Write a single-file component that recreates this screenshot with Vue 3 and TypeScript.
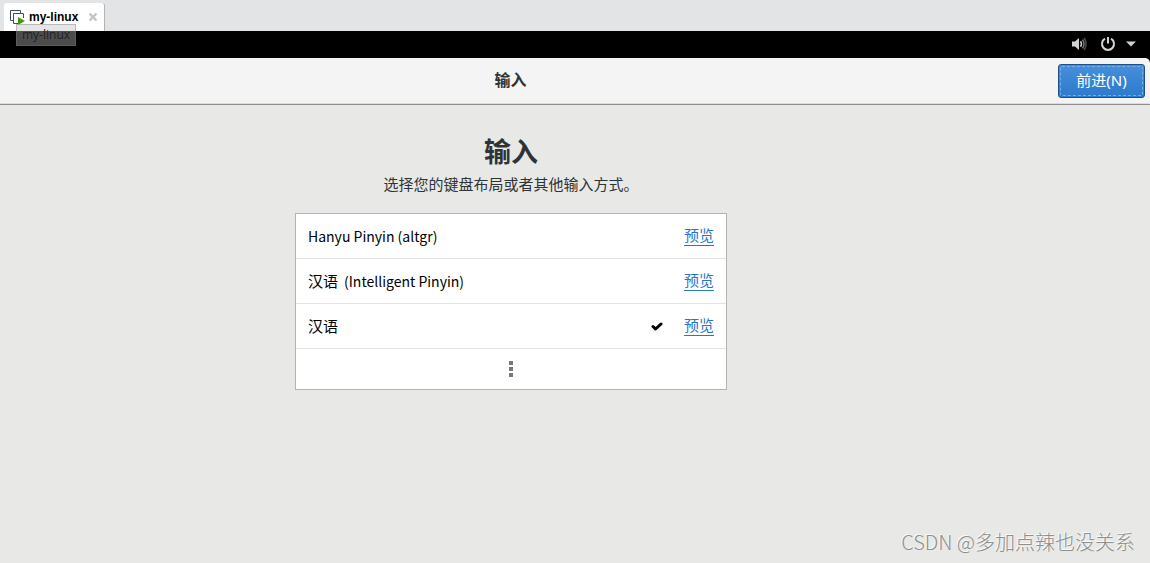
<script setup lang="ts">
import { ref } from 'vue'

interface InputSource {
  id: string
  language?: string
  layout?: string
}

const sources: InputSource[] = [
  { id: 'altgr', layout: 'Hanyu Pinyin (altgr)' },
  { id: 'intelligent', language: '汉语', layout: '(Intelligent Pinyin)' },
  { id: 'chinese', language: '汉语' },
]
const selected = ref('chinese')
</script>

<template>
  <div class="app">
    <nav class="tabs">
      <div class="tab">
        <svg class="vm-icon" width="16" height="16" viewBox="0 0 16 16" aria-hidden="true">
          <path d="M3.5 11.5h-3v-10h10v3" fill="none" stroke="#3d4f5c" />
          <path d="M8 14.500H3.500v-10h10v4.500" fill="#fff" stroke="#3d4f5c" />
          <path d="M8 8l7 4-7 4z" fill="#3f9c0c" />
        </svg>
        <a class="tab-name" href="#my-linux">my-linux</a>
        <button class="close" type="button" aria-label="关闭">
          <svg width="10" height="10" viewBox="0 0 10 10"><path d="M1.500 1.500l7 7M8.500 1.500l-7 7" stroke="#c2c2c2" stroke-width="2.200" /></svg>
        </button>
        <span class="tooltip">my-linux</span>
      </div>
    </nav>

    <div class="status">
      <svg width="16" height="16" viewBox="0 0 16 16" aria-hidden="true">
        <path d="M1 5.500h3L8 2v12l-4-3.500H1z" fill="#d2d2d2" />
        <path d="M9.500 5.200q2 2.800 0 5.600" fill="none" stroke="#c4c4c4" stroke-width="1.500" />
        <path d="M11.500 3.500q3 4.500 0 9" fill="none" stroke="#777" stroke-width="1.500" />
        <path d="M13.300 2q3.500 6 0 12" fill="none" stroke="#4c4c4c" stroke-width="1.500" />
      </svg>
      <svg class="power" width="16" height="16" viewBox="0 0 16 16" aria-hidden="true">
        <path d="M5 2.700a6 6 0 1 0 6 0M8 1v6.500" fill="none" stroke="#d2d2d2" stroke-width="2" />
      </svg>
      <svg width="10" height="6" viewBox="0 0 10 6" aria-hidden="true"><path d="M0 .5h10L5 5.500z" fill="#d2d2d2" /></svg>
    </div>

    <div class="header-back">
      <header class="header">
        <span class="header-title">输入</span>
        <button class="next" type="button"><span>前进(N)</span></button>
      </header>
    </div>

    <main class="content">
      <h1>输入</h1>
      <p>选择您的键盘布局或者其他输入方式。</p>
      <ul class="list">
        <li v-for="source in sources" :key="source.id" class="row">
          <label class="choice">
            <span v-if="source.language">{{ source.language }}</span>
            <span v-if="source.layout" class="layout">{{ source.layout }}</span>
            <input v-model="selected" type="radio" name="source" :value="source.id" />
            <svg v-if="selected === source.id" width="12" height="10" viewBox="0 0 12 10" aria-hidden="true">
              <path d="M2 5.500l2.500 2.500L10 3" fill="none" stroke="#000" stroke-width="3" stroke-linecap="round" stroke-linejoin="round" />
            </svg>
          </label>
          <a class="preview" href="#preview">预览</a>
        </li>
        <li>
          <button class="more" type="button" aria-label="更多">
            <svg width="4" height="16" viewBox="0 0 4 16"><path d="M0 0h4v4H0zM0 6h4v4H0zM0 12h4v4H0z" fill="#777" /></svg>
          </button>
        </li>
      </ul>
    </main>
    <footer class="credit">CSDN @多加点辣也没关系</footer>
  </div>
</template>

<style>
body {
  margin: 0;
  background: #e8e8e7;
}
</style>

<style scoped>
.app {
  --side: 128px;
  display: flex;
  flex-direction: column;
  min-height: 100vh;
  box-sizing: border-box;
  font-family: "Noto Sans", "Noto Sans CJK SC", sans-serif;
  color: #2e3436;
  background: #e8e8e7;
}
button {
  padding: 0;
  border: 0;
  background: none;
  font: inherit;
}
.tabs {
  display: flex;
  height: 31px;
  padding-left: 4px;
  align-items: flex-end;
  background: #e3e4e6;
}
.tab {
  position: relative;
  display: flex;
  align-items: center;
  box-sizing: border-box;
  height: 28px;
  padding: 0 6px;
  border-right: 1px solid #b4b4b4;
  border-radius: 3px 3px 0 0;
  background: #fff;
}
.tab-name {
  margin: 0 10px 0 3px;
  color: #000;
  font: bold 12px/16px "Liberation Sans", sans-serif;
  text-decoration: none;
}
.close,
.close svg {
  display: block;
}
.tooltip {
  position: absolute;
  top: 21px;
  left: 12px;
  box-sizing: border-box;
  padding: 0 5px;
  border: 1px solid rgba(120, 120, 120, 0.4);
  background: rgba(190, 190, 190, 0.4);
  color: #222;
  font: 12px/20px "Open Sans", sans-serif;
  white-space: nowrap;
}
.status {
  display: flex;
  align-items: center;
  justify-content: flex-end;
  height: 26px;
  padding: 0 14px 1px 0;
  background: #000;
}
.power {
  margin: 0 10px 0 13px;
}
.header-back {
  background: #000;
}
.header {
  display: flex;
  align-items: center;
  box-sizing: border-box;
  height: 47px;
  padding-right: 5px;
  border-bottom: 1px solid #8d8d8a;
  border-top-right-radius: 5px;
  background: #f4f4f4;
  box-shadow: inset 0 -1px #dcdcda;
}
.header-title {
  flex: 1;
  padding: 0 37px 2px 0;
  font-size: 16px;
  line-height: 24px;
  font-weight: bold;
  text-align: center;
}
.next {
  box-sizing: border-box;
  width: 87px;
  height: 34px;
  padding: 1px;
  border: 1px solid #1c5187;
  border-radius: 3px;
  background: linear-gradient(#468fdc, #2d7acb);
  color: #fff;
  font-size: 15px;
}
.next span {
  display: block;
  padding-bottom: 2px;
  border: 1px dashed #76afe6;
  border-radius: 2px;
  line-height: 26px;
}
.content {
  flex: 1;
  display: flex;
  flex-direction: column;
  align-items: center;
  padding: 27px var(--side) 0 0;
}
h1 {
  margin: 0;
  font-size: 27px;
  line-height: 40px;
}
p {
  margin: 0;
  font-size: 15px;
  line-height: 24px;
}
.list {
  width: 100%;
  max-width: 430px;
  margin: 17px 0 0;
  padding: 0;
  border: 1px solid #b3b3af;
  background: #fff;
  list-style: none;
}
.row {
  display: flex;
  align-items: center;
  gap: 21px;
  height: 44px;
  padding: 0 12px;
  border-bottom: 1px solid #e3e3e2;
}
.choice {
  flex: 1;
  display: flex;
  align-items: center;
  gap: 6px;
  color: #000;
  font-size: 15px;
  line-height: 24px;
}
.layout {
  font-family: "Noto Sans CJK SC", sans-serif;
  font-size: 14px;
}
.choice input {
  appearance: none;
  flex: 1;
  margin: 0;
}
.preview {
  border-bottom: 1px solid #2a76c6;
  color: #2a76c6;
  font-size: 15px;
  line-height: 19px;
  text-decoration: none;
}
.more {
  display: flex;
  align-items: center;
  justify-content: center;
  width: 100%;
  height: 40px;
}
.credit {
  padding: 0 15px 6px 0;
  color: #8e8e8d;
  font-family: "Noto Sans CJK SC", sans-serif;
  font-size: 20px;
  font-weight: 300;
  line-height: 30px;
  text-align: right;
  text-shadow: -1px -1px #fafafa;
}
</style>
